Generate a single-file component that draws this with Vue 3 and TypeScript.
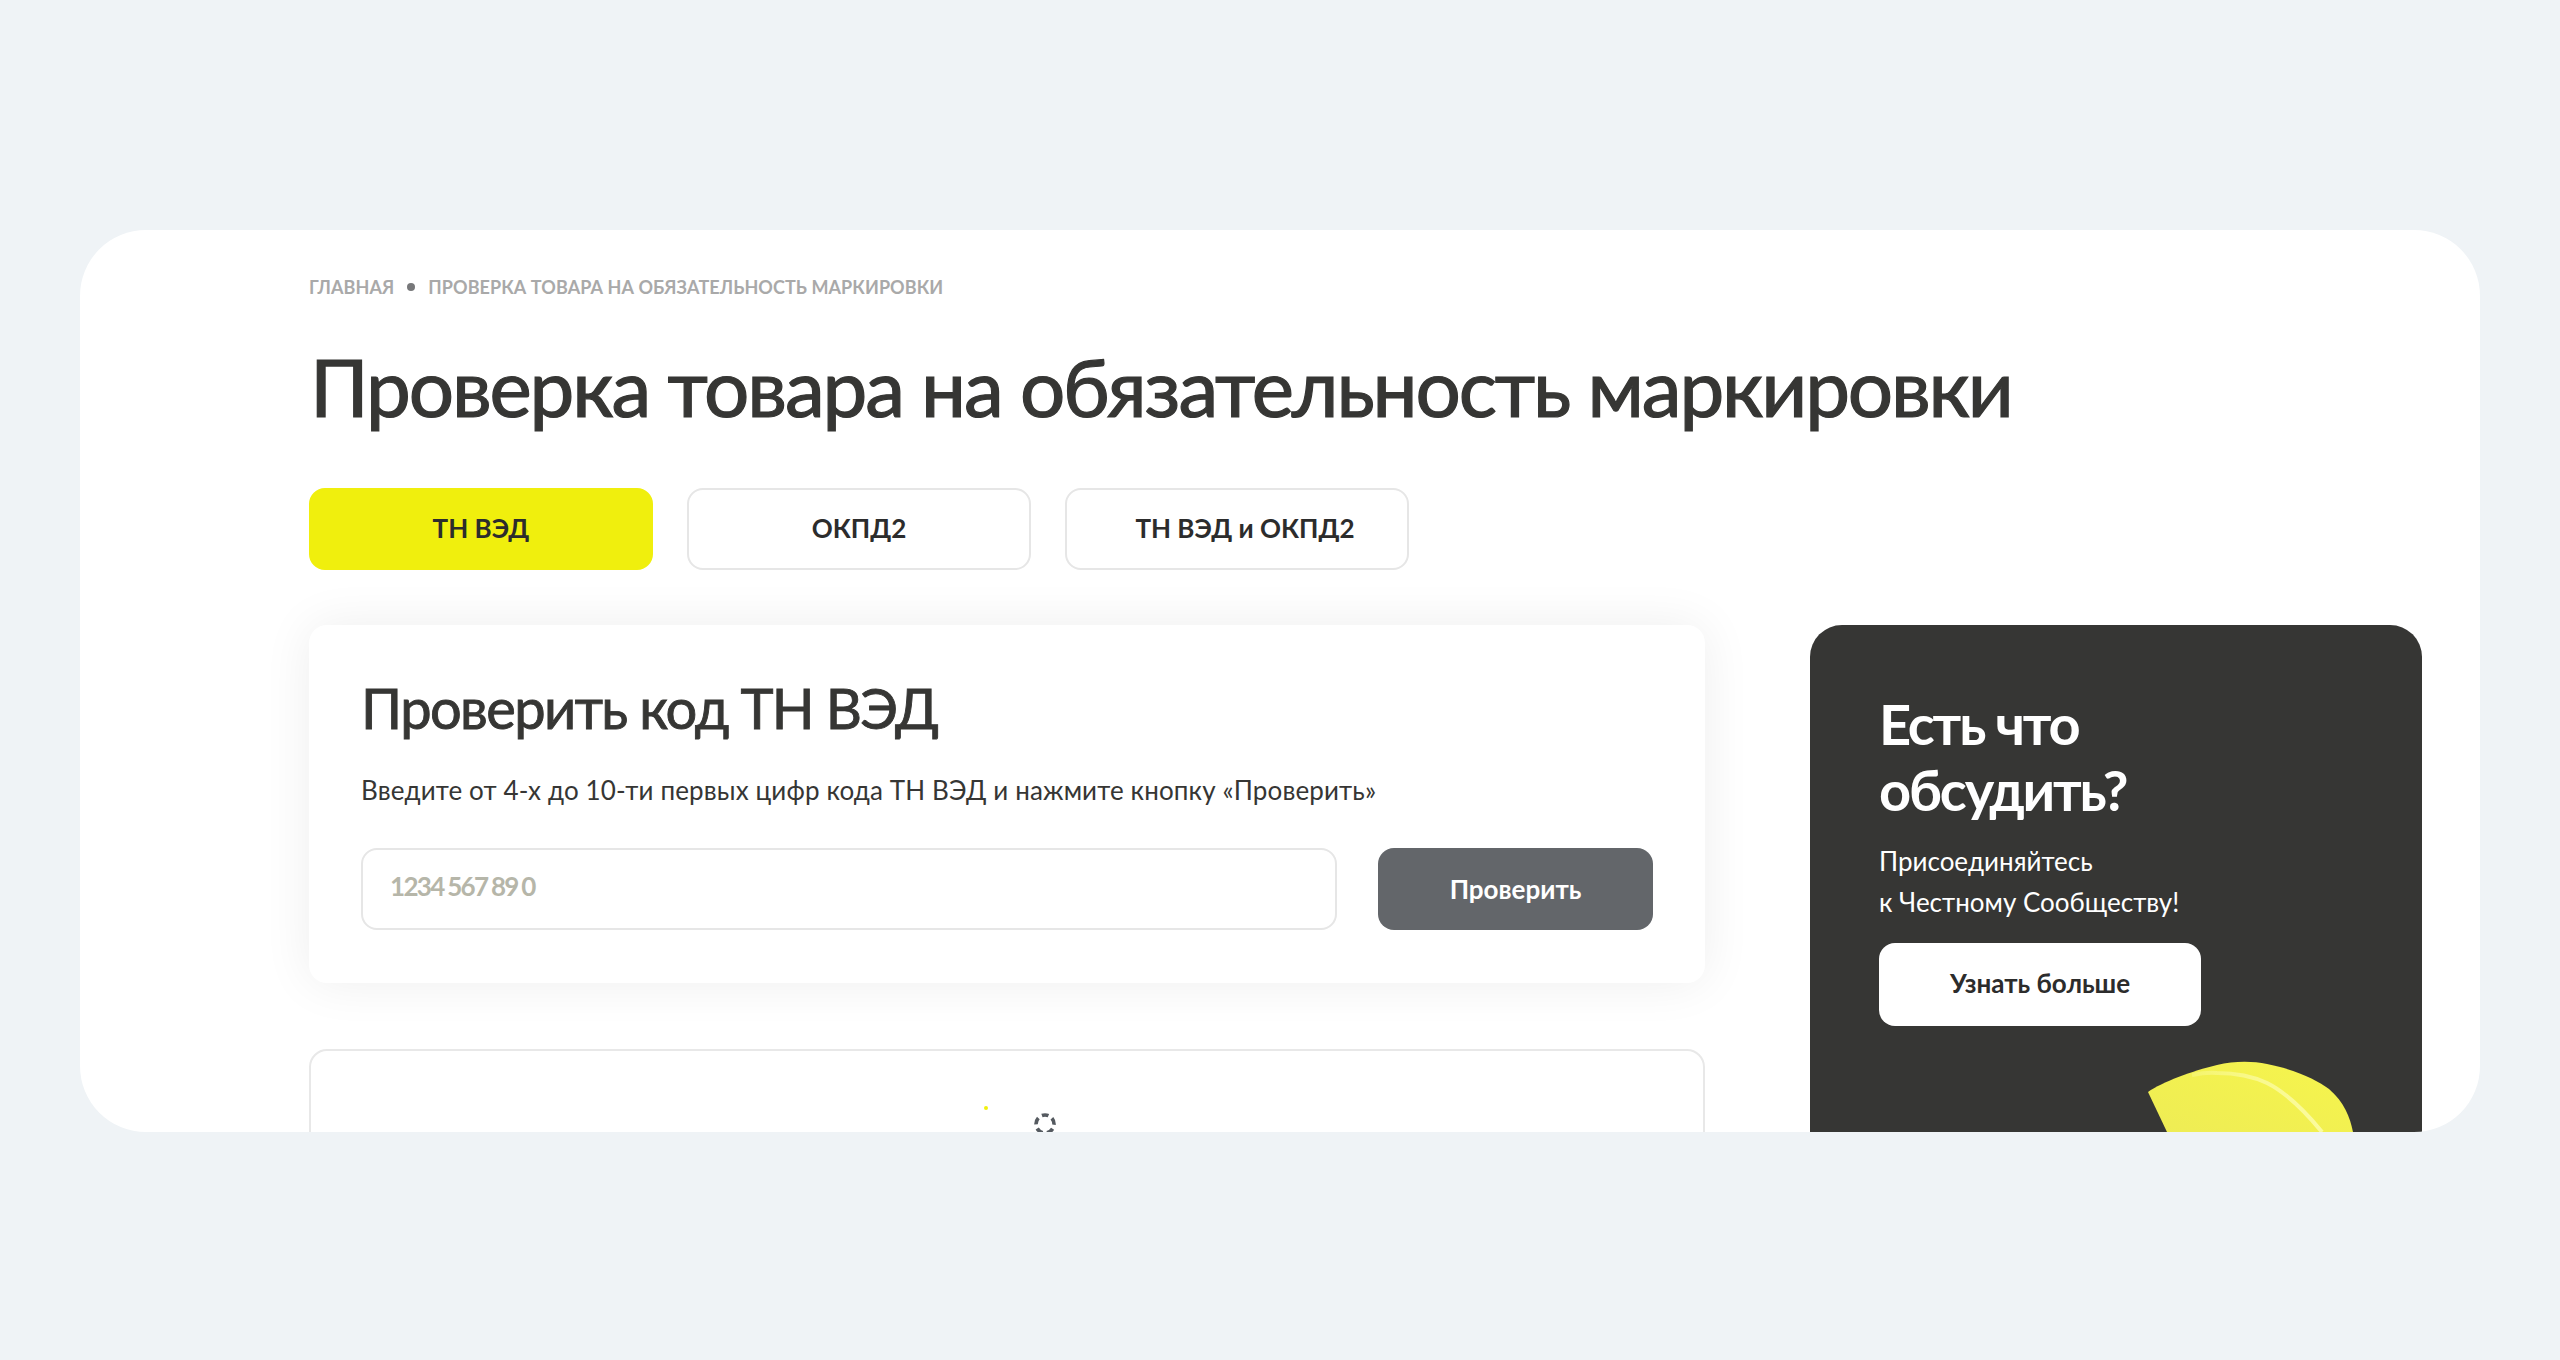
<script setup lang="ts">
const tabs: string[] = ['ТН ВЭД', 'ОКПД2', 'ТН ВЭД и ОКПД2']
</script>

<template>
  <div class="page">
    <section class="panel">
      <nav class="crumbs">
        <span>ГЛАВНАЯ</span>
        <i class="dot"></i>
        <span>ПРОВЕРКА ТОВАРА НА ОБЯЗАТЕЛЬНОСТЬ МАРКИРОВКИ</span>
      </nav>
      <h1 class="title">Проверка товара на обязательность маркировки</h1>
      <div class="tabs">
        <button v-for="(t, i) in tabs" :key="t" class="tab" :class="{ active: i === 0 }">{{ t }}</button>
      </div>
      <div class="columns">
        <div class="left">
          <div class="card">
            <h2 class="card-title">Проверить код ТН ВЭД</h2>
            <p class="card-text">Введите от 4-х до 10-ти первых цифр кода ТН ВЭД и нажмите кнопку «Проверить»</p>
            <div class="form">
              <input class="field" type="text" placeholder="1234 567 89 0" />
              <button class="submit">Проверить</button>
            </div>
          </div>
          <div class="result">
            <i class="spark"></i>
            <svg class="spinner" width="24" height="24" viewBox="0 0 24 24">
              <circle cx="12" cy="12" r="9" fill="none" stroke="#555a60" stroke-width="3.6" stroke-dasharray="7 4.31" stroke-dashoffset="3.5" transform="rotate(-90 12 12)" />
            </svg>
          </div>
        </div>
        <aside class="promo">
          <h3 class="promo-title">Есть что<br />обсудить?</h3>
          <p class="promo-text">Присоединяйтесь<br />к Честному Сообществу!</p>
          <button class="promo-btn">Узнать больше</button>
          <svg class="pill" width="240" height="90" viewBox="0 0 240 90">
            <defs>
              <linearGradient id="pillFill" x1="0" y1="1" x2="1" y2="0">
                <stop offset="0" stop-color="#eeec55" />
                <stop offset="1" stop-color="#f6f54c" />
              </linearGradient>
              <linearGradient id="pillEdge" x1="0" y1="0" x2="1" y2="0">
                <stop offset="0" stop-color="#f5f56c" />
                <stop offset="0.5" stop-color="#f9f98e" />
                <stop offset="1" stop-color="#fbfb9e" />
              </linearGradient>
            </defs>
            <path d="M26 30 C40 20 70 9 95 3 C112 -1 130 -1 145 2 C175 8 195 18 207 27 C222 40 228 55 231 70 L45 70 Z" fill="url(#pillFill)" />
            <path d="M70 13 C80 11 88 10.5 95 11 C115 11 130 14 145 21 C165 31 182 48 200 70" fill="none" stroke="url(#pillEdge)" stroke-width="4" />
          </svg>
        </aside>
      </div>
    </section>
  </div>
</template>

<style>
html, body { margin: 0; background: #eff3f6; }
</style>

<style scoped>
.page {
  height: 1360px;
  box-sizing: border-box;
  padding: 230px 80px 0;
  background: #eff3f6;
  font-family: Lato, "Noto Sans", sans-serif;
  color: #363634;
}
.panel {
  height: 902px;
  box-sizing: border-box;
  padding: 43px 58px 0 229px;
  background: #fff;
  border-radius: 66px;
  overflow: hidden;
}
.crumbs {
  display: flex;
  align-items: center;
  gap: 13px;
  height: 27px;
  font-size: 18px;
  font-weight: 700;
  letter-spacing: 0.08px;
  color: #a9a9a9;
  white-space: nowrap;
}
.dot { width: 8px; height: 8px; border-radius: 50%; background: #77787a; }
.title {
  margin: 33px 0 0 1px;
  font-size: 80px;
  line-height: 106px;
  font-weight: 400;
  letter-spacing: -2.15px;
  -webkit-text-stroke: 1.2px #363634;
  white-space: nowrap;
}
.tabs { display: flex; gap: 34px; margin-top: 49px; }
.tab {
  width: 344px;
  height: 82px;
  box-sizing: border-box;
  padding-bottom: 3px;
  border: 2px solid #e6e6e6;
  border-radius: 16px;
  background: #fff;
  font: 700 26px Lato, "Noto Sans", sans-serif;
  color: #2c2c2c;
}
.tab:last-child { padding-left: 22px; }
.tab.active { background: #f0ef0d; border-color: #f0ef0d; }
.columns { display: flex; gap: 105px; margin-top: 55px; }
.left { width: 1396px; flex: none; }
.card {
  height: 358px;
  box-sizing: border-box;
  padding: 47px 52px 0;
  border-radius: 18px;
  background: #fff;
  box-shadow: 0 0 50px rgba(0, 0, 0, 0.07);
}
.card-title {
  margin: 0;
  font-size: 56px;
  line-height: 72px;
  font-weight: 400;
  letter-spacing: -1.6px;
  -webkit-text-stroke: 0.9px #363634;
  white-space: nowrap;
}
.card-text { margin: 28px 0 0; font-size: 26px; line-height: 36px; letter-spacing: 0.13px; white-space: nowrap; }
.form { display: flex; gap: 41px; margin-top: 40px; }
.field {
  width: 976px;
  height: 82px;
  flex: none;
  box-sizing: border-box;
  padding: 0 27px 6px;
  border: 2px solid #e6e6e6;
  border-radius: 16px;
  outline: none;
  font: 700 26px Lato, "Noto Sans", sans-serif;
  letter-spacing: -1.7px;
  word-spacing: -1px;
  background: #fff;
}
.field::placeholder { color: #b6b6a9; opacity: 1; }
.submit {
  width: 275px;
  height: 82px;
  flex: none;
  border: 0;
  border-radius: 16px;
  background: #63666a;
  color: #fff;
  font: 700 26px Lato, "Noto Sans", sans-serif;
}
.result {
  position: relative;
  height: 300px;
  box-sizing: border-box;
  margin-top: 66px;
  border: 2px solid #e8e8e8;
  border-radius: 18px;
}
.spark {
  position: absolute;
  left: 673px;
  top: 55px;
  width: 4px;
  height: 4px;
  border-radius: 50%;
  background: #f1f00e;
}
.spinner { position: absolute; left: 722px; top: 61px; }
.promo {
  position: relative;
  width: 612px;
  height: 600px;
  flex: none;
  box-sizing: border-box;
  padding: 66px 0 0 69px;
  border-radius: 32px;
  background: #363634;
  color: #fff;
}
.promo-title { margin: 0; font-size: 56px; line-height: 66px; font-weight: 700; letter-spacing: -2.2px; }
.promo-text { margin: 18px 0 0; font-size: 26px; line-height: 41px; }
.promo-btn {
  display: block;
  width: 322px;
  height: 83px;
  margin-top: 20px;
  padding-bottom: 4px;
  border: 0;
  border-radius: 16px;
  background: #fff;
  color: #2c2c2c;
  font: 700 26px Lato, "Noto Sans", sans-serif;
}
.pill { position: absolute; left: 312px; top: 437px; overflow: visible; }
</style>
